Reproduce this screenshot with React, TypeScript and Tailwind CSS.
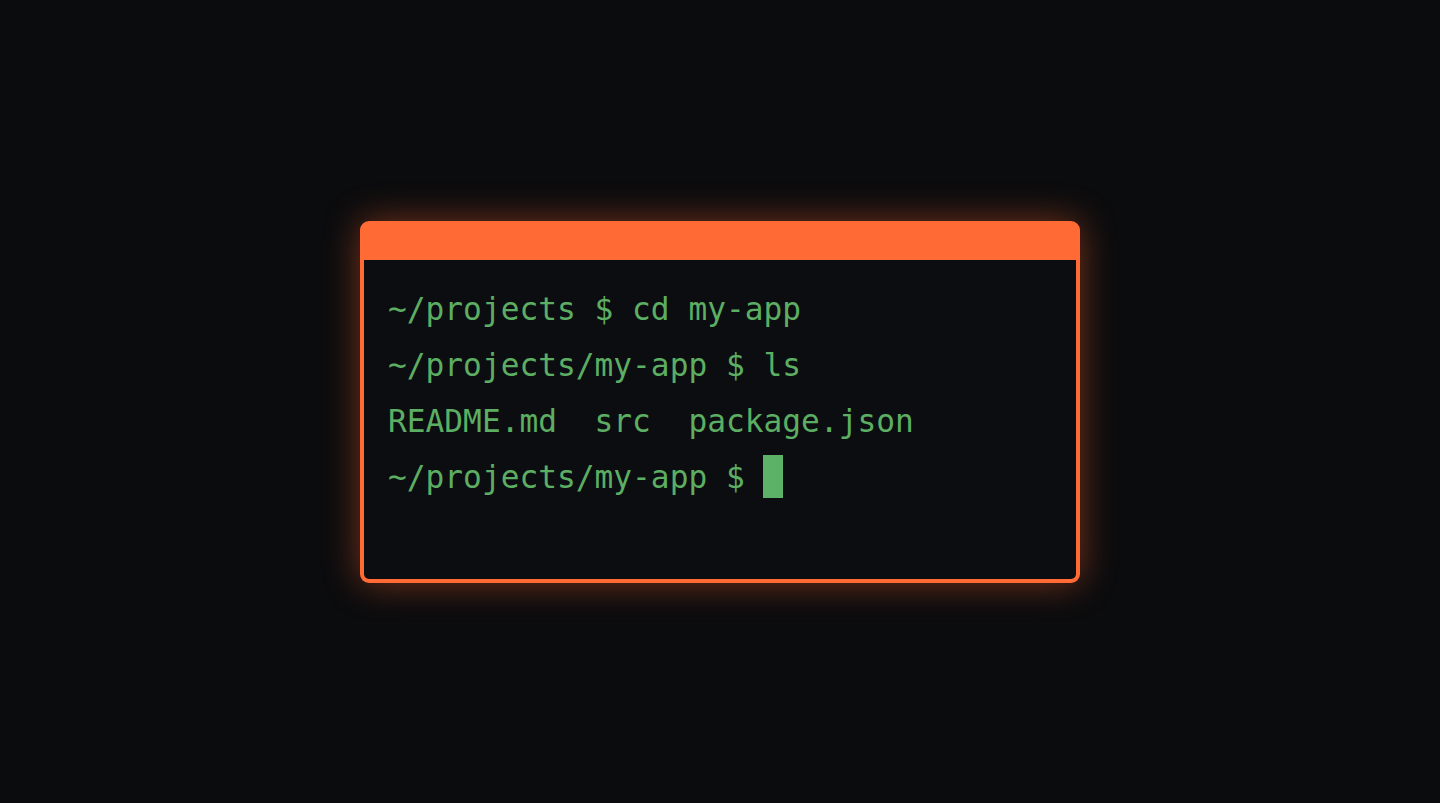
import React from "react";

const lines = [
  "~/projects $ cd my-app",
  "~/projects/my-app $ ls",
  "README.md  src  package.json",
];

const App: React.FC = () => {
  return (
    <div className="w-full h-[803px] bg-[#0b0c0e] flex items-center justify-center">
      {/* Terminal window */}
      <div className="w-[720px] h-[362px] flex flex-col bg-[#ff6a35] rounded-[9px] p-[4px] pt-0 shadow-[0_0_36px_rgba(255,100,45,0.45)]">
        <div className="h-[39px] shrink-0" />
        <div
          className="flex-1 bg-[#0c0d10] rounded-b-[5px] px-[24px] pt-[21px] text-[#5cae63] text-[31.2px] leading-[56px] whitespace-pre"
          style={{ fontFamily: '"DejaVu Sans Mono", "Liberation Mono", monospace' }}
        >
          {lines.map((l, i) => (
            <div key={i}>{l}</div>
          ))}
          <div className="flex items-center">
            <span>~/projects/my-app $ </span>
            <span className="inline-block w-[20px] h-[43px] -ml-[1px] bg-[#5cb367]" />
          </div>
        </div>
      </div>
    </div>
  );
};

export default App;
